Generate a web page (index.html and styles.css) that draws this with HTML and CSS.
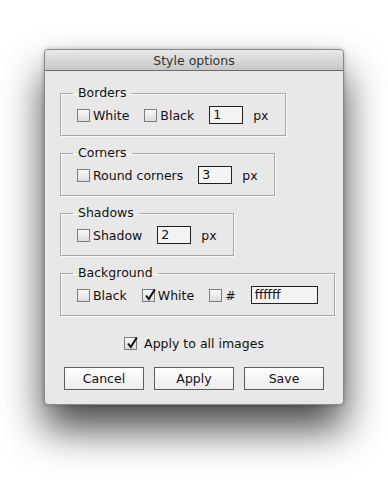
FILE: index.html
```html
<!DOCTYPE html>
<html>
<head>
<meta charset="utf-8">
<link rel="stylesheet" href="styles.css">
</head>
<body>
<div class="stage">
<div class="window">
  <div class="titlebar">Style options</div>
  <div class="content">
    <fieldset class="group">
      <legend>Borders</legend>
      <div class="row">
        <label class="opt"><span class="cb"></span>White</label>
        <label class="opt"><span class="cb"></span>Black</label>
        <span class="field">1</span>
        <span class="unit">px</span>
      </div>
    </fieldset>
    <fieldset class="group">
      <legend>Corners</legend>
      <div class="row">
        <label class="opt"><span class="cb"></span>Round corners</label>
        <span class="field">3</span>
        <span class="unit">px</span>
      </div>
    </fieldset>
    <fieldset class="group">
      <legend>Shadows</legend>
      <div class="row">
        <label class="opt"><span class="cb"></span>Shadow</label>
        <span class="field">2</span>
        <span class="unit">px</span>
      </div>
    </fieldset>
    <fieldset class="group">
      <legend>Background</legend>
      <div class="row">
        <label class="opt"><span class="cb"></span>Black</label>
        <label class="opt"><span class="cb"><svg viewBox="0 0 13 13" width="13" height="13"><path d="M3 6.5 L5.8 10 L11.8 0.5" fill="none" stroke="#111" stroke-width="2"/></svg></span>White</label>
        <label class="opt"><span class="cb"></span>#</label>
        <span class="field wide">ffffff</span>
      </div>
    </fieldset>
    <div class="applyall">
      <label class="opt big"><span class="cb"><svg viewBox="0 0 13 13" width="13" height="13"><path d="M3 6.5 L5.8 10 L11.8 0.5" fill="none" stroke="#111" stroke-width="2"/></svg></span>Apply to all images</label>
    </div>
    <div class="buttons">
      <button class="btn">Cancel</button>
      <button class="btn">Apply</button>
      <button class="btn">Save</button>
    </div>
  </div>
</div>
</div>
</body>
</html>
```
FILE: styles.css
```css
html, body {
  margin: 0;
  padding: 0;
  background: #ffffff;
  height: 100%;
}
body {
  font-family: "DejaVu Sans", "Liberation Sans", sans-serif;
  font-size: 12px;
  color: #111;
}
.stage {
  min-height: 484px;
  padding: 49px 0 0 44px;
  box-sizing: border-box;
}
.window {
  width: 298px;
  height: 354px;
  border: 1px solid #8a8a8a;
  border-radius: 4px;
  background: #e8e8e8;
  box-shadow: 0 24px 40px rgba(0, 0, 0, 0.72), 0 0 4px rgba(0, 0, 0, 0.25);
}
.titlebar {
  height: 20px;
  line-height: 21px;
  text-align: center;
  color: #333;
  font-size: 12.5px;
  background: linear-gradient(#e8e8e8, #c8c8c8);
  border-bottom: 1px solid #6b6b6b;
  border-radius: 4px 4px 0 0;
}
.content {
  display: flex;
  flex-direction: column;
  align-items: flex-start;
  padding: 14px 0 0 15px;
}
.group {
  margin: 0 0 9px 0;
  padding: 5px 16px 11px 16px;
  border: 1px solid #a8a8a8;
  box-shadow: 1px 1px 0 #fafafa, inset 1px 1px 0 #fafafa;
  min-inline-size: 0;
}
.group legend {
  margin-left: -4px;
  padding: 0 5px;
  line-height: 16px;
  font-size: 12.5px;
}
.row {
  display: flex;
  align-items: center;
  height: 18px;
  gap: 15px;
}
.opt {
  display: flex;
  align-items: center;
  gap: 3px;
  font-size: 12.5px;
}
.opt.big {
  gap: 7px;
}
.cb {
  width: 11px;
  height: 11px;
  border: 1px solid #7d7d7d;
  background: linear-gradient(#fafafa, #dcdcdc);
  position: relative;
  flex: none;
}
.cb svg {
  position: absolute;
  left: 0;
  top: -1px;
}
.field {
  width: 29px;
  height: 16px;
  line-height: 16px;
  border: 1px solid #222;
  background: #f3f3f3;
  padding-left: 3px;
  font-size: 12.5px;
}
.field.wide {
  width: 62px;
}
.unit {
  margin-left: -5px;
  font-size: 12.5px;
}
.applyall {
  align-self: stretch;
  display: flex;
  justify-content: center;
  padding: 11px 0 0 0;
  margin-left: -15px;
}
.buttons {
  display: flex;
  gap: 10px;
  margin: 16px 0 0 4px;
}
.btn {
  width: 80px;
  height: 23px;
  border: 1px solid #5e5e5e;
  border-radius: 0;
  background: linear-gradient(#ffffff, #ececec);
  font-family: "DejaVu Sans", "Liberation Sans", sans-serif;
  font-size: 12.5px;
  color: #111;
  padding: 0;
}
```
